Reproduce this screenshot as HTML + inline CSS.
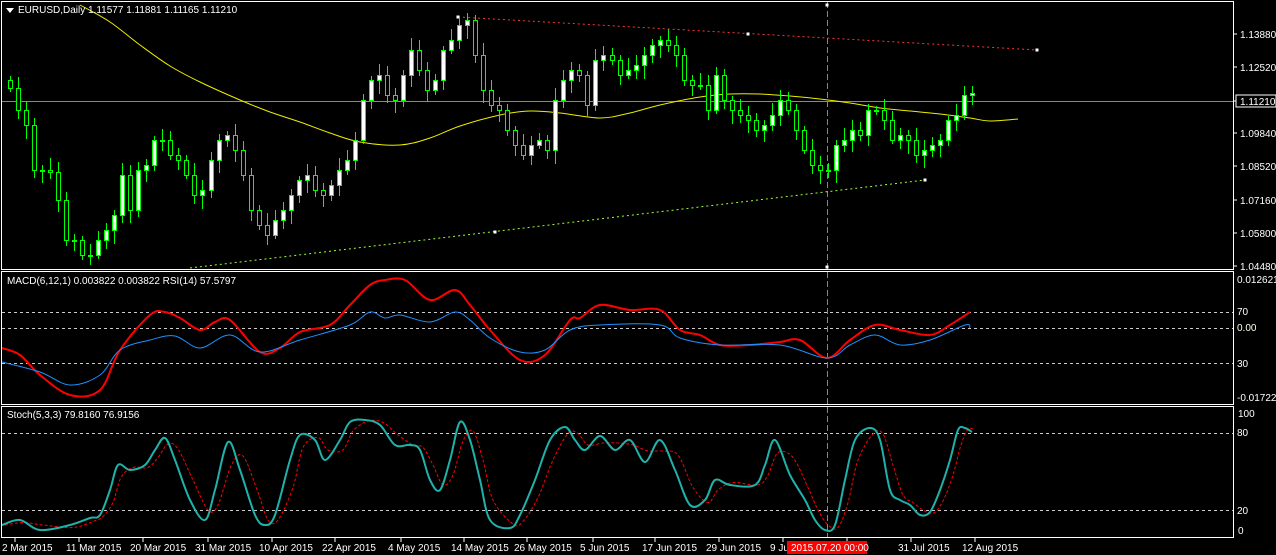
<!DOCTYPE html>
<html><head><style>
html,body{margin:0;padding:0;background:#000;width:1276px;height:555px;overflow:hidden}
svg{position:absolute;left:0;top:0}
text{font-family:"Liberation Sans",sans-serif;font-size:10px;fill:#fff}
</style></head><body>
<svg id="s" width="1276" height="555" xmlns="http://www.w3.org/2000/svg">
<g id="g"></g>
<rect x="1.5" y="1.5" width="1232" height="268" fill="none" stroke="#fff"/>
<rect x="1.5" y="271.5" width="1232" height="133" fill="none" stroke="#fff"/>
<rect x="1.5" y="406.5" width="1232" height="131" fill="none" stroke="#fff"/>
<polygon points="6,8 14,8 10,13" fill="#fff"/>
<text x="18" y="13">EURUSD,Daily  1.11577 1.11881 1.11165 1.11210</text>
<text x="7" y="284">MACD(6,12,1) 0.003822 0.003822  RSI(14) 57.5797</text>
<text x="7" y="418">Stoch(5,3,3) 79.8160 76.9156</text>
<g>
<text x="1240" y="38">1.13880</text><text x="1240" y="71">1.12520</text>
<text x="1240" y="137">1.09840</text><text x="1240" y="170">1.08520</text>
<text x="1240" y="204">1.07160</text><text x="1240" y="237">1.05800</text>
<text x="1240" y="270">1.04480</text>
<rect x="1236" y="95" width="40" height="12" fill="#000" stroke="#fff"/>
<text x="1240" y="105">1.11210</text>
<text x="1237" y="283">0.012621</text><text x="1237" y="315">70</text>
<text x="1237" y="331" style="fill:#ffe">0.00</text><text x="1237" y="367">30</text>
<text x="1237" y="401">-0.017225</text>
<text x="1238" y="417">100</text><text x="1237" y="436">80</text>
<text x="1237" y="514">20</text><text x="1238" y="534">0</text>
</g>
<g id="dates">
<text x="2" y="551">2 Mar 2015</text><text x="66" y="551">11 Mar 2015</text>
<text x="130" y="551">20 Mar 2015</text><text x="195" y="551">31 Mar 2015</text>
<text x="259" y="551">10 Apr 2015</text><text x="322" y="551">22 Apr 2015</text>
<text x="388" y="551">4 May 2015</text><text x="451" y="551">14 May 2015</text>
<text x="514" y="551">26 May 2015</text><text x="580" y="551">5 Jun 2015</text>
<text x="642" y="551">17 Jun 2015</text><text x="706" y="551">29 Jun 2015</text>
<text x="770" y="551">9 Jul 2015</text><text x="834" y="551">2015</text>
<text x="898" y="551">31 Jul 2015</text><text x="962" y="551">12 Aug 2015</text>
<rect x="787" y="541" width="80" height="13" fill="#f00"/>
<text x="791" y="551">2015.07.20 00:00</text>
</g>
</svg>
<script>
var g=document.getElementById('g'),ns='http://www.w3.org/2000/svg';
function el(t,a){var e=document.createElementNS(ns,t);for(var k in a)e.setAttribute(k,a[k]);g.appendChild(e);return e;}
function sm(p,c,w,d){var s='M'+p[0][0]+','+p[0][1];for(var i=0;i<p.length-1;i++){var p0=p[Math.max(i-1,0)],p1=p[i],p2=p[i+1],p3=p[Math.min(i+2,p.length-1)];
s+=' C'+(p1[0]+(p2[0]-p0[0])/6)+','+(p1[1]+(p2[1]-p0[1])/6)+' '+(p2[0]-(p3[0]-p1[0])/6)+','+(p2[1]-(p3[1]-p1[1])/6)+' '+p2[0]+','+p2[1];}
el('path',{d:s,fill:'none',stroke:c,'stroke-width':w,'stroke-dasharray':d||''});}
[312,328,363,433,510].forEach(function(y){el('line',{x1:2,x2:1233,y1:y+.5,y2:y+.5,stroke:'#ccc','stroke-dasharray':'3,3'});});
el('line',{x1:2,x2:1233,y1:101.5,y2:101.5,stroke:'#888'});
el('line',{x1:827.5,x2:827.5,y1:2,y2:537,stroke:'#888','stroke-dasharray':'6,3'});
[15,79,143,208,272,335,401,464,527,593,655,719,783,847,911,975].forEach(function(x){el('line',{x1:x,x2:x,y1:538,y2:542,stroke:'#fff'});});
[34,67,101,133,166,200,233,266].forEach(function(y){el('line',{x1:1233,x2:1237,y1:y,y2:y,stroke:'#fff'});});
el('line',{x1:458,y1:17,x2:1037,y2:50,stroke:'#f33','stroke-dasharray':'2,3'});
el('line',{x1:190,y1:268,x2:925,y2:180,stroke:'#9f3','stroke-dasharray':'2,3'});
[[458,17],[748,34],[1037,50],[495,232],[925,180],[827,5],[827,267]].forEach(function(p){el('rect',{x:p[0]-1.5,y:p[1]-1.5,width:3,height:3,fill:'#fff'});});
sm([[80,5],[110,22],[140,45],[170,66],[200,82],[240,100],[270,112],[300,122],[330,133],[360,142],[400,145],[430,138],[460,126],[500,115],[530,111],[560,113],[600,118],[630,113],[660,105],[700,97],[730,94],[760,94],[790,96],[820,99],[850,103],[880,108],[910,111],[940,114],[970,118],[990,121],[1018,119]],'#ee0',1);
var c=[88,110,125,170,170,172,200,240,240,255,255,240,230,215,175,210,170,165,140,140,155,160,175,195,190,160,140,135,150,175,210,225,235,220,210,195,180,175,190,195,185,170,160,140,100,80,75,95,100,75,50,70,90,80,50,40,25,20,55,90,105,110,130,145,155,145,140,150,100,80,70,75,105,60,55,60,75,70,65,55,45,40,45,55,80,85,85,110,75,100,110,115,120,130,125,115,100,110,130,150,165,170,170,145,140,130,135,110,110,120,140,135,140,155,150,145,140,120,115,95,93];
var pr=80;
c.forEach(function(cl,i){var x=Math.round(10+8.02*i),o=pr,top=Math.min(o,cl),bot=Math.max(o,cl);
var hi=top-4-(i*7%9),lo=bot+4+(i*5%11);
el('line',{x1:x+.5,x2:x+.5,y1:hi,y2:lo,stroke:'#0f0'});
el('rect',{x:x-1.5,y:top+.5,width:4,height:Math.max(bot-top,1),fill:cl<o?'#fff':'#000',stroke:'#0f0'});pr=cl;});
sm([[2,348],[20,355],[40,375],[70,395],[100,390],[120,350],[150,315],[165,312],[180,318],[200,330],[215,322],[230,320],[260,352],[280,348],[300,332],[330,325],[350,305],[370,285],[385,280],[405,280],[430,300],[455,290],[470,305],[490,330],[520,360],[545,355],[570,320],[580,318],[600,305],[630,310],[660,310],[680,330],[700,335],[720,345],[750,345],[780,342],[800,340],[827,358],[850,340],[875,325],[900,330],[930,335],[950,325],[970,312]],'#f00',2);
sm([[2,362],[40,372],[70,385],[100,375],[120,350],[150,340],[175,336],[200,348],[230,335],[260,352],[300,340],[350,325],[370,312],[385,318],[400,315],[430,322],[455,312],[470,320],[490,338],[520,352],[545,350],[570,330],[600,325],[660,325],[680,338],[720,345],[780,345],[827,358],[850,345],[875,335],[900,345],[930,340],[965,325],[970,328]],'#1e90ff',1);
var st=[[2,525],[20,520],[40,530],[70,525],[90,518],[100,515],[110,490],[118,465],[130,470],[145,465],[155,450],[165,438],[175,460],[190,500],[205,520],[215,490],[228,442],[240,470],[255,515],[265,525],[275,515],[290,460],[300,435],[315,440],[325,460],[340,440],[350,422],[365,420],[380,425],[395,445],[410,445],[420,450],[430,480],[440,490],[450,460],[460,422],[470,440],[480,480],[490,520],[510,528],[520,515],[535,480],[550,440],[565,427],[575,440],[585,450],[600,436],[615,450],[630,440],[645,462],[660,440],[675,470],[690,505],[705,500],[715,480],[730,485],[755,485],[765,465],[775,440],[790,475],[805,500],[815,520],[825,530],[835,525],[845,480],[855,440],[870,428],[880,440],[890,490],[900,500],[910,505],[920,515],[930,512],[940,490],[950,460],[958,430],[965,428],[972,432]];
sm(st.map(function(p,i){var a=st[Math.max(i-1,0)];return [p[0]+3,(p[1]*0.5+a[1]*0.5)];}),'#f00',1,'3,2');
sm(st,'#20b2aa',2);
</script>
</body></html>
